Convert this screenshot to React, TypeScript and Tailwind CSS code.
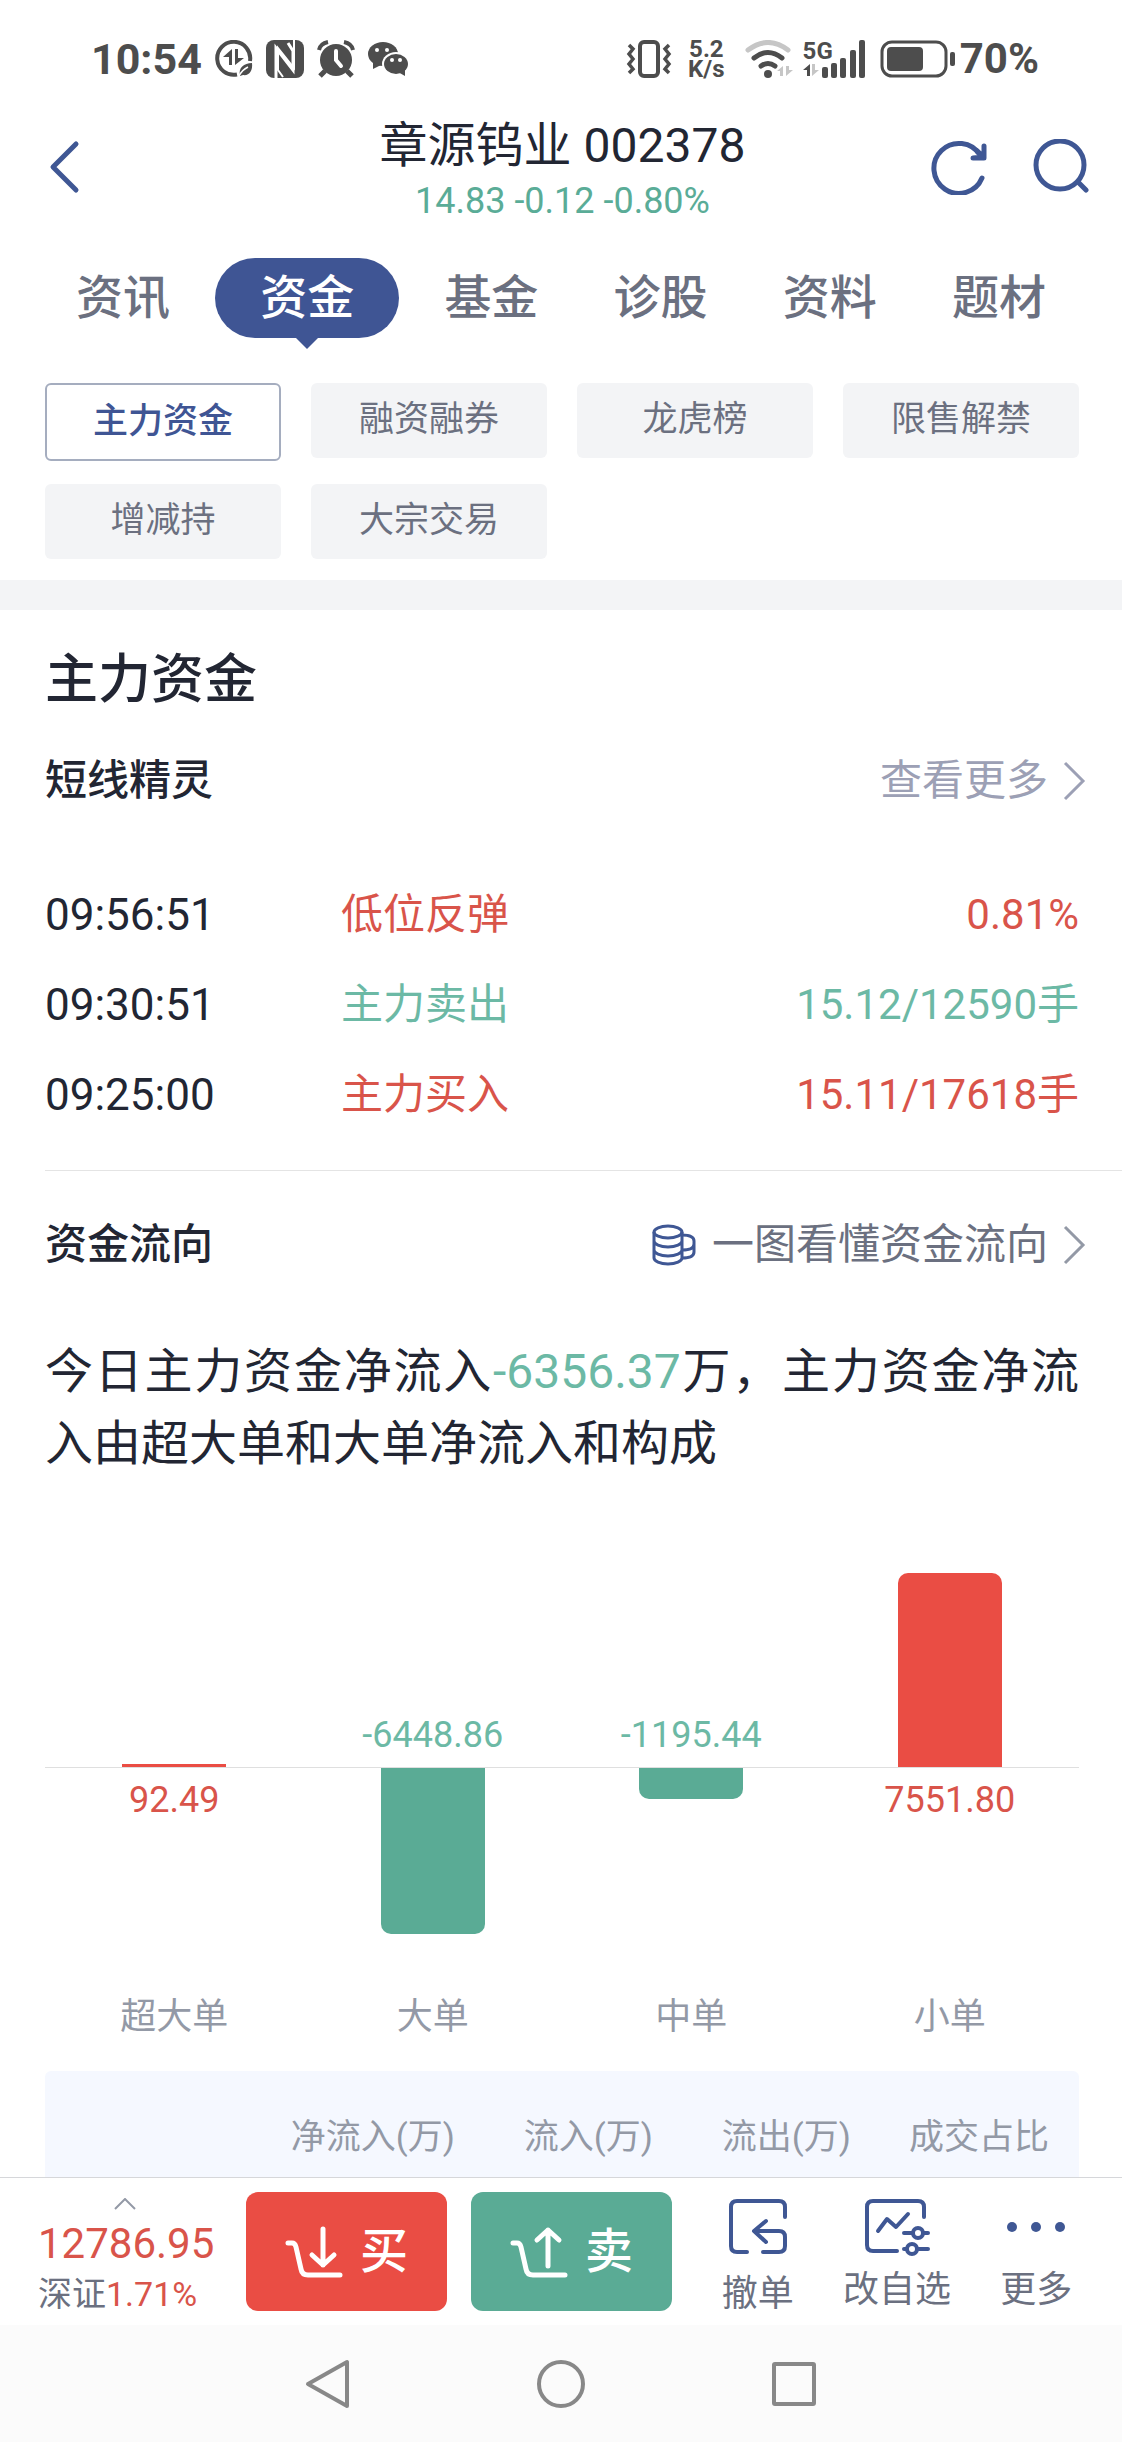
import clsx from "clsx";

interface Tick {
  time: string;
  label: string;
  value: string;
  up: boolean;
}

interface Flow {
  name: string;
  value: number;
}

const tabs = ["资讯", "资金", "基金", "诊股", "资料", "题材"];
const chips = ["主力资金", "融资融券", "龙虎榜", "限售解禁", "增减持", "大宗交易"];

const ticks: Tick[] = [
  { time: "09:56:51", label: "低位反弹", value: "0.81%", up: true },
  { time: "09:30:51", label: "主力卖出", value: "15.12/12590手", up: false },
  { time: "09:25:00", label: "主力买入", value: "15.11/17618手", up: true },
];

const flows: Flow[] = [
  { name: "超大单", value: 92.49 },
  { name: "大单", value: -6448.86 },
  { name: "中单", value: -1195.44 },
  { name: "小单", value: 7551.8 },
];

// pixels for one unit (万) of money flow
const BAR_SCALE = 194 / 7551.8;

const StatusBar = () => (
  <div className="flex h-[118px] items-center justify-between pr-[83px] pl-[91px] text-[#4d4d4d]">
    <div className="flex items-center gap-[13px]">
      <span className="text-[43px] leading-none font-bold">10:54</span>
      <svg width="38" height="38" viewBox="0 0 38 38" fill="none">
        <path d="M22 34.500A16.500 16.500 0 1 1 35 21" stroke="currentColor" strokeWidth="4" />
        <path d="M17 9v16h-3v-8H8zM20 9v16l9-7h-6V9z" fill="currentColor" />
        <path d="M25 36c-2-8 4-13 12-13 1 8-3 13-9 12z" fill="currentColor" />
        <path d="M24 36c2-4 5-7 9-9" stroke="#fff" strokeWidth="1.500" />
      </svg>
      <svg width="38" height="38" viewBox="0 0 38 38">
        <rect width="38" height="38" rx="8" fill="currentColor" />
        <path d="M10 38V8l17 22V11l-5-8" fill="none" stroke="#fff" strokeWidth="3" />
        <path d="M28 0v28L12 8v22l5 7" fill="none" stroke="#fff" strokeWidth="2" />
      </svg>
      <svg width="38" height="38" viewBox="0 0 38 38" fill="none" stroke="currentColor">
        <circle cx="19" cy="20" r="16" fill="currentColor" stroke="none" />
        <path d="M2 10c1-5 4-7 9-8M36 10c-1-5-4-7-9-8" strokeWidth="4" />
        <path d="M8 31l-5 5M30 31l5 5" strokeWidth="5" />
        <path d="M19 11v9l5 6" stroke="#fff" strokeWidth="4" strokeLinecap="round" />
      </svg>
      <svg width="42" height="38" viewBox="0 0 42 38">
        <ellipse cx="15" cy="14" rx="15" ry="12" fill="currentColor" />
        <path d="M5 22v7l8-4z" fill="currentColor" />
        <ellipse cx="28" cy="24" rx="14" ry="12" fill="#fff" />
        <ellipse cx="28" cy="24" rx="12" ry="10" fill="currentColor" />
        <path d="M30 32l7 4v-7z" fill="currentColor" />
        <g fill="#fff">
          <circle cx="9" cy="10" r="2" />
          <circle cx="19" cy="10" r="2" />
          <circle cx="24" cy="20" r="2" />
          <circle cx="32" cy="20" r="2" />
        </g>
      </svg>
    </div>
    <div className="flex items-center gap-4">
      <svg width="46" height="38" viewBox="0 0 46 38" fill="none" stroke="currentColor" strokeWidth="4">
        <rect x="14" y="2" width="18" height="34" rx="4" />
        <path d="M3 5l4 4-4 5 4 5-4 5 4 5-4 4M43 5l-4 4 4 5-4 5 4 5-4 5 4 4" strokeWidth="3.500" />
      </svg>
      <div className="flex flex-col items-center text-[24px] leading-5 font-bold">
        <span>5.2</span>
        <span>K/s</span>
      </div>
      <svg width="50" height="38" viewBox="0 0 50 38" fill="none" strokeLinecap="round" strokeWidth="5" className="ml-1">
        <path d="M3 10Q23-5 43 10" stroke="#c6c6c6" />
        <path d="M9 18Q23 7 37 18M16 26q7-5 14 0" stroke="currentColor" />
        <circle cx="23" cy="34" r="4" fill="currentColor" />
        <path d="M38 26v10h-3v-5h-3zM41 26v10l7-6h-4v-4z" fill="#c6c6c6" />
      </svg>
      <div className="-ml-2 flex items-end">
        <div className="flex flex-col items-start">
          <span className="text-[24px] leading-[22px] font-bold">5G</span>
          <svg width="18" height="16" viewBox="0 0 18 16">
            <path d="M7 2v12H4V8H0z" fill="currentColor" />
            <path d="M9 2v12l7-6h-4V2z" fill="#c6c6c6" />
          </svg>
        </div>
        <svg width="44" height="38" viewBox="0 0 44 38" className="-ml-[11px]" fill="currentColor">
          <rect x="0" y="27" width="6" height="11" rx="2" />
          <rect x="9" y="23" width="6" height="15" rx="2" />
          <rect x="18" y="18" width="6" height="20" rx="2" />
          <rect x="28" y="10" width="6" height="28" rx="2" />
          <rect x="37" y="0" width="6" height="38" rx="2" />
        </svg>
      </div>
      <div className="-ml-[2px] flex items-center gap-1">
        <svg width="76" height="38" viewBox="0 0 76 38" fill="none">
          <rect x="2" y="2" width="64" height="34" rx="10" stroke="currentColor" strokeWidth="3" />
          <rect x="7" y="7" width="36" height="24" rx="4" fill="currentColor" />
          <rect x="70" y="12" width="5" height="14" rx="2" fill="currentColor" />
        </svg>
        <span className="text-[42px] leading-none font-bold">70%</span>
      </div>
    </div>
  </div>
);

const Header = () => (
  <header className="flex h-[110px] items-center justify-between pr-[33px] pl-[44px]">
    <button aria-label="返回" className="w-[150px] pb-3">
      <svg width="40" height="56" viewBox="0 0 40 56" fill="none" stroke="#3f5794" strokeWidth="5">
        <path d="M32 5L9 28l23 23" strokeLinecap="round" strokeLinejoin="round" />
      </svg>
    </button>
    <div className="text-center">
      <h1 className="text-[48px] leading-14 text-[#222633]">章源钨业 002378</h1>
      <p className="text-[36px] leading-[54px] text-[#5aac97]">14.83 -0.12 -0.80%</p>
    </div>
    <div className="flex gap-[46px] pb-3">
      <button aria-label="刷新">
        <svg width="56" height="56" viewBox="0 0 56 56" fill="none" stroke="#3f5794" strokeWidth="5">
          <path d="M51 39A25 25 0 1 1 49 16" strokeLinecap="round" />
          <path d="M53 7v12H42l11-1L46 12" strokeLinecap="round" strokeLinejoin="round" />
        </svg>
      </button>
      <button aria-label="搜索">
        <svg width="56" height="56" viewBox="0 0 56 56" fill="none" stroke="#3f5794" strokeWidth="5">
          <circle cx="27" cy="26" r="24" />
          <path d="M45 43l8 8" strokeLinecap="round" />
        </svg>
      </button>
    </div>
  </header>
);

const Chevron = ({ color }: { color: string }) => (
  <svg width="24" height="42" viewBox="0 0 24 42" fill="none" stroke={color} strokeWidth="3">
    <path d="M3 3l18 18L3 39" />
  </svg>
);

const FlowBar = ({ name, value }: Flow) => {
  const up = value > 0;
  const text = (
    <span className={clsx("text-[36px] leading-[64px]", up ? "text-[#d9544a]" : "text-[#6cb9a5]")}>
      {value.toFixed(2)}
    </span>
  );
  const bar = (
    <div
      className={clsx("w-[104px]", up ? "bg-[#ea4d44]" : "rounded-b-[10px] bg-[#5aab95]", value > 500 && "rounded-t-[10px]")}
      style={{ height: Math.round(Math.max(Math.abs(value) * BAR_SCALE, 3)) }}
    ></div>
  );
  return (
    <li className="flex flex-1 flex-col items-center">
      <div className="flex h-[201px] w-full flex-col items-center justify-end border-b border-[#dfdfdf]">
        {up ? bar : text}
      </div>
      <div className="flex h-[213px] flex-col items-center">{up ? text : bar}</div>
      <span className="text-[36px] leading-[72px] text-[#9399a6]">{name}</span>
    </li>
  );
};

const TradeBar = () => (
  <div className="flex h-[148px] items-center border-t border-[#d6d7da] bg-white">
    <button className="flex w-[246px] flex-col items-start pt-2 pl-[38px]">
      <svg width="22" height="12" viewBox="0 0 22 12" fill="none" stroke="#9399a6" strokeWidth="2" className="mb-1 ml-[76px]">
        <path d="M1 11L11 1l10 10" />
      </svg>
      <span className="text-[42px] leading-[60px] text-[#d9544a]">12786.95</span>
      <span className="text-[34px] leading-10 text-[#6b7080]">
        深证<span className="text-[#d9544a]">1.71%</span>
      </span>
    </button>
    <button className="flex h-[119px] w-[201px] items-center justify-center gap-[17px] rounded-xl bg-[#ea4d44] text-[48px] font-medium text-white">
      <svg width="58" height="52" viewBox="0 0 58 52" fill="none" stroke="#fff" strokeWidth="5" strokeLinecap="round" strokeLinejoin="round">
        <path d="M3 17h4q3 0 4 4l5 22q1 6 7 6h32" />
        <path d="M38 3v36M27 29l11 10 11-10" />
      </svg>
      买
    </button>
    <button className="ml-6 flex h-[119px] w-[201px] items-center justify-center gap-[17px] rounded-xl bg-[#5aab95] text-[48px] font-medium text-white">
      <svg width="58" height="52" viewBox="0 0 58 52" fill="none" stroke="#fff" strokeWidth="5" strokeLinecap="round" strokeLinejoin="round">
        <path d="M3 17h4q3 0 4 4l5 22q1 6 7 6h32" />
        <path d="M38 40V4M27 14L38 4l11 10" />
      </svg>
      卖
    </button>
    <div className="mx-4 mt-5 flex flex-1 items-start self-start text-[36px] leading-[52px] text-[#6b7080]">
      <button className="flex flex-1 flex-col items-center gap-3">
        <svg width="60" height="58" viewBox="0 0 60 58" fill="none" stroke="#3f5794" strokeWidth="4" strokeLinecap="round" strokeLinejoin="round">
          <path d="M57 19V9q0-6-6-6H9Q3 3 3 9v39q0 6 6 6h10" />
          <path d="M35 54h16q6 0 6-6V39q0-6-6-6H27M38 23L26 33l12 11" />
        </svg>
        撤单
      </button>
      <button className="flex flex-1 flex-col items-center gap-2">
        <svg width="66" height="58" viewBox="0 0 66 58" fill="none" stroke="#3f5794" strokeWidth="4" strokeLinecap="round" strokeLinejoin="round">
          <path d="M60 19V9q0-6-6-6H9Q3 3 3 9v38q0 6 6 6h24" />
          <path d="M14 33l9-12 9 8 12-13M40 35h8M60 35h4M40 51h2M54 51h10" />
          <circle cx="54" cy="35" r="5" />
          <circle cx="48" cy="51" r="5" />
        </svg>
        改自选
      </button>
      <button className="flex flex-1 flex-col items-center gap-2">
        <svg width="58" height="58" viewBox="0 0 58 58" fill="#3f5794">
          <circle cx="5" cy="29" r="5" />
          <circle cx="29" cy="29" r="5" />
          <circle cx="53" cy="29" r="5" />
        </svg>
        更多
      </button>
    </div>
  </div>
);

const SystemNav = () => (
  <nav className="flex h-[117px] items-center justify-center bg-[#fbfbfb]">
    <button aria-label="后退" className="flex w-[233px] justify-center">
      <svg width="50" height="50" viewBox="0 0 50 50" fill="none" stroke="#888" strokeWidth="4" strokeLinejoin="round">
        <path d="M44 3v44L5 25z" />
      </svg>
    </button>
    <button aria-label="主屏幕" className="flex w-[233px] justify-center">
      <svg width="50" height="50" viewBox="0 0 50 50" fill="none" stroke="#888" strokeWidth="4">
        <circle cx="25" cy="25" r="22" />
      </svg>
    </button>
    <button aria-label="最近任务" className="flex w-[233px] justify-center">
      <svg width="50" height="50" viewBox="0 0 50 50" fill="none" stroke="#888" strokeWidth="4" strokeLinejoin="round">
        <rect x="5" y="5" width="40" height="40" rx="1" />
      </svg>
    </button>
  </nav>
);

export default function App() {
  return (
    <div className="flex min-h-screen flex-col bg-white font-[Roboto,'Noto_Sans_CJK_SC',sans-serif] text-[#222633]">
      <StatusBar />
      <Header />

      <nav className="mt-[30px] flex h-20 items-center justify-between px-[76px] text-[47px] font-medium">
        {tabs.map((tab) =>
          tab === "资金" ? (
            <button key={tab} className="relative -mx-[30px] h-20 w-[184px] rounded-full bg-[#3f5594] text-white">
              {tab}
              <svg width="24" height="13" viewBox="0 0 24 13" className="absolute top-[79px] left-20" fill="#3f5594">
                <path d="M0 0h24L12 12z" />
              </svg>
            </button>
          ) : (
            <button key={tab} className="text-[#6b7080]">
              {tab}
            </button>
          )
        )}
      </nav>

      <div className="mt-[45px] grid grid-cols-4 gap-x-[30px] gap-y-[26px] pr-[43px] pb-[21px] pl-[45px] text-[35px]">
        {chips.map((chip, i) => (
          <button
            key={chip}
            className={clsx(
              "rounded-md",
              i === 0
                ? "-mb-[3px] h-[78px] border-2 border-[#a5adbf] font-medium text-[#3f5594]"
                : "h-[75px] bg-[#f3f4f6] text-[#6b7080]"
            )}
          >
            {chip}
          </button>
        ))}
      </div>
      <div className="h-[30px] bg-[#f3f4f6]"></div>

      <main className="flex-1 pl-[45px]">
        <h2 className="mt-[30px] text-[53px] leading-20 font-medium">主力资金</h2>
        <div className="mt-[31px] flex items-center justify-between pr-9 leading-[60px]">
          <h3 className="text-[42px] font-medium">短线精灵</h3>
          <a href="#more" className="flex items-center gap-[14px] text-[42px] text-[#9ca0b5]">
            查看更多
            <Chevron color="#9ca0b5" />
          </a>
        </div>

        <ul className="mt-[59px] pr-[43px] text-[42px] leading-[90px]">
          {ticks.map((t) => (
            <li key={t.time} className="flex">
              <span className="w-[296px] text-[44px]">{t.time}</span>
              <span className={clsx("flex flex-1 justify-between", t.up ? "text-[#d9544a]" : "text-[#6cb9a5]")}>
                <span>{t.label}</span>
                <span>{t.value}</span>
              </span>
            </li>
          ))}
        </ul>

        <hr className="mt-[30px] border-t border-[#e4e4e4]" />

        <div className="mt-11 flex items-center justify-between pr-9 leading-[60px]">
          <h3 className="text-[42px] font-medium">资金流向</h3>
          <a href="#flow" className="flex items-center gap-[14px] text-[42px] text-[#6b7080]">
            <svg width="46" height="44" viewBox="0 0 46 44" fill="none" stroke="#3f5794" strokeWidth="3">
              <ellipse cx="16" cy="9" rx="14" ry="6" />
              <path d="M2 9v26c0 3 6 6 14 6s14-3 14-6V9M2 18c0 3 6 6 14 6s14-3 14-6M2 27c0 3 6 6 14 6s14-3 14-6" />
              <path d="M30 12c7 0 12 2 12 6v11c0 4-5 6-12 6M42 21c0 4-5 6-12 6" />
            </svg>
            一图看懂资金流向
            <Chevron color="#9399a6" />
          </a>
        </div>

        <p className="mt-[61px] mr-[43px] text-justify text-[48px] leading-[72px]">
          今日主力资金净流入<span className="text-[#6cb9a5]">-6356.37</span>万，主力资金净流入由超大单和大单净流入和构成
        </p>

        <ul className="mt-[87px] mr-[43px] flex">
          {flows.map((f) => (
            <FlowBar key={f.name} name={f.name} value={f.value} />
          ))}
        </ul>

        <div className="mt-[18px] mr-[43px] rounded-t-md bg-[#f5f8ff] pt-[41px] pr-[30px] pb-[13px]">
          <table className="w-full text-right text-[35px] leading-[52px] text-[#9399a6]">
            <thead>
              <tr>
                <td></td>
                <th scope="col" className="w-[198px] font-normal">净流入(万)</th>
                <th scope="col" className="w-[198px] font-normal">流入(万)</th>
                <th scope="col" className="w-[198px] font-normal">流出(万)</th>
                <th scope="col" className="w-[198px] font-normal">成交占比</th>
              </tr>
            </thead>
          </table>
        </div>
      </main>

      <footer className="sticky bottom-0">
        <TradeBar />
        <SystemNav />
      </footer>
    </div>
  );
}
